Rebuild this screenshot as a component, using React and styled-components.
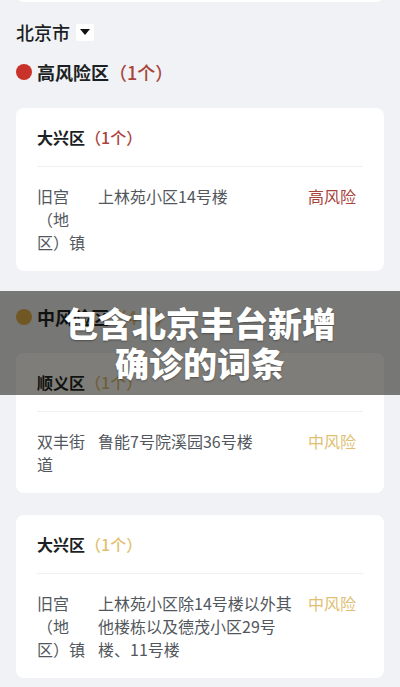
import React from "react";
import styled, { createGlobalStyle } from "styled-components";

const Global = createGlobalStyle`
  html, body { margin: 0; padding: 0; background: #f0f2f5; }
  body { font-family: "Noto Sans CJK SC", "Noto Sans", sans-serif; }
  * { box-sizing: border-box; }
`;

const Page = styled.div`
  position: relative;
  width: 400px;
  height: 687px;
  overflow: hidden;
  background: #f0f2f5;
  padding: 0 16px;
`;

const StubCard = styled.div`
  height: 40px;
  margin-top: -38px;
  background: #fff;
  border-radius: 8px;
`;

const CityRow = styled.div`
  display: flex;
  align-items: center;
  gap: 6px;
  margin-top: 18px;
  height: 24px;
  font-size: 18px;
  font-weight: 500;
  color: #1c1f23;
`;

const DropBox = styled.span`
  display: inline-flex;
  align-items: center;
  justify-content: center;
  width: 18px;
  height: 17px;
  background: #fff;
  border-radius: 2px;
`;

const Triangle = styled.span`
  width: 0;
  height: 0;
  border-left: 5px solid transparent;
  border-right: 5px solid transparent;
  border-top: 6px solid #111;
`;

const SectionTitle = styled.div`
  display: flex;
  align-items: center;
  height: 24px;
  margin-top: ${(p) => p.$mt}px;
  margin-bottom: 24px;
  font-size: 18px;
  font-weight: 700;
  color: #1c1f23;
`;

const Dot = styled.span`
  width: 16px;
  height: 16px;
  border-radius: 50%;
  background: ${(p) => p.$color};
  margin-right: 5px;
  flex-shrink: 0;
`;

const Count = styled.span`
  color: ${(p) => p.$color};
  font-weight: 500;
  font-size: ${(p) => p.$size || 18}px;
`;

const Card = styled.div`
  background: #fff;
  border-radius: 8px;
  padding: 0 21px;
  margin-bottom: ${(p) => p.$mb || 0}px;
`;

const CardHeader = styled.div`
  height: 59px;
  display: flex;
  align-items: center;
  border-bottom: 1px solid #eef0f3;
  font-size: 16px;
  font-weight: 700;
  color: #1c1f23;
`;

const Row = styled.div`
  display: grid;
  grid-template-columns: 50px 1fr 55px;
  column-gap: 11px;
  padding: 18px 0 17px;
  font-size: 16px;
  line-height: 23px;
  color: #52575d;
`;

const Cell = styled.div``;

const Risk = styled.div`
  color: ${(p) => p.$color};
`;

const Overlay = styled.div`
  position: absolute;
  left: 0;
  right: 0;
  top: 291px;
  height: 104px;
  background: rgba(8, 6, 0, 0.52);
  padding-top: 12px;
  text-align: center;
  color: #fff;
  font-size: 34px;
  font-weight: 900;
  line-height: 40px;
  text-shadow: 0 1px 2px rgba(0, 0, 0, 0.35);
`;

const Line = styled.div``;

const RED = "#a9443b";
const YELLOW = "#e1bf72";

export default function App() {
  return (
    <>
      <Global />
      <Page>
        <StubCard />
        <CityRow>
          北京市
          <DropBox>
            <Triangle />
          </DropBox>
        </CityRow>
        <SectionTitle $mt={16}>
          <Dot $color="#c8322a" />
          高风险区<Count $color={RED}>（1个）</Count>
        </SectionTitle>
        <Card>
          <CardHeader>
            大兴区<Count $color={RED} $size={16}>（1个）</Count>
          </CardHeader>
          <Row>
            <Cell>旧宫（地区）镇</Cell>
            <Cell>上林苑小区14号楼</Cell>
            <Risk $color={RED}>高风险</Risk>
          </Row>
        </Card>
        <SectionTitle $mt={34}>
          <Dot $color="#e3b04c" />
          中风险区<Count $color={YELLOW}>（4个）</Count>
        </SectionTitle>
        <Card $mb={22}>
          <CardHeader>
            顺义区<Count $color={YELLOW} $size={16}>（1个）</Count>
          </CardHeader>
          <Row>
            <Cell>双丰街道</Cell>
            <Cell>鲁能7号院溪园36号楼</Cell>
            <Risk $color={YELLOW}>中风险</Risk>
          </Row>
        </Card>
        <Card>
          <CardHeader>
            大兴区<Count $color={YELLOW} $size={16}>（1个）</Count>
          </CardHeader>
          <Row>
            <Cell>旧宫（地区）镇</Cell>
            <Cell>上林苑小区除14号楼以外其他楼栋以及德茂小区29号楼、11号楼</Cell>
            <Risk $color={YELLOW}>中风险</Risk>
          </Row>
        </Card>
        <Overlay>
          <Line>包含北京丰台新增</Line>
          <Line>确诊的词条</Line>
        </Overlay>
      </Page>
    </>
  );
}
